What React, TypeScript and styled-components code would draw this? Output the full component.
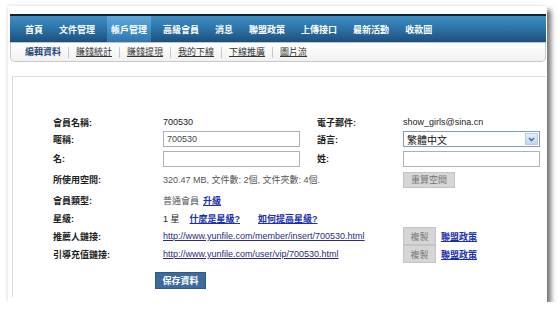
import React from "react";
import styled, { createGlobalStyle, css } from "styled-components";

const Global = createGlobalStyle`
  html, body { margin: 0; padding: 0; background: #ffffff; }
  body { font-family: "Liberation Sans", "Noto Sans CJK TC", sans-serif; font-size: 9px; color: #222; }
`;

const Page = styled.div`
  margin: 6px 0 0 8px;
  width: 539px;
  height: 296px;
  box-sizing: border-box;
  padding: 8px 1px 0 2px;
  background: #fff;
  display: flex;
  flex-direction: column;
  box-shadow: 4px 4px 5px rgba(0, 0, 0, 0.55), -1px -1px 3px rgba(0, 0, 0, 0.08);
`;

const Nav = styled.div`
  height: 28px;
  box-sizing: border-box;
  border-top: 2px solid #14212e;
  background: linear-gradient(#3f8fc4, #2a6fa3 55%, #1d4f7c);
  display: flex;
  align-items: stretch;
  padding-left: 7px;
`;

const NavItem = styled.div<{ $active?: boolean }>`
  margin: 0 4px;
  padding: 0 4px;
  display: flex;
  align-items: center;
  color: #fff;
  font-weight: bold;
  font-size: 9px;
  white-space: nowrap;
  ${(p) =>
    p.$active &&
    css`
      background: linear-gradient(#5fa9da, #3f8dc2 60%, #2f75ab);
    `}
`;

const SubNav = styled.div`
  height: 20px;
  box-sizing: border-box;
  border: 1px solid #c9c9c9;
  border-top: 1px solid #b9c6d2;
  border-radius: 0 0 5px 5px;
  background: linear-gradient(#ffffff, #f1f1f1);
  display: flex;
  align-items: center;
  padding-left: 14px;
`;

const SubItem = styled.a<{ $first?: boolean }>`
  padding: 0 7px;
  line-height: 11px;
  font-size: 9px;
  white-space: nowrap;
  color: #333;
  text-decoration: underline;
  border-left: 1px solid #c8c8c8;
  ${(p) =>
    p.$first &&
    css`
      padding-left: 0;
      border-left: none;
      font-weight: bold;
      color: #24477a;
      text-decoration: none;
    `}
`;

const Panel = styled.div`
  flex: 1;
  margin: 14px 0 5px 2px;
  border-top: 1px solid #dcdcdc;
  border-left: 1px solid #dcdcdc;
  padding: 37px 0 0 40px;
`;

const Form = styled.div`
  display: grid;
  grid-template-columns: 110px 154px 86px 137px;
  grid-template-rows: 16px 18px 21px 21px 20px 17px 18px 18px;
  align-items: center;
`;

const Label = styled.div`
  font-weight: bold;
  color: #222;
  white-space: nowrap;
`;

const Value = styled.div<{ $muted?: boolean }>`
  white-space: nowrap;
  color: ${(p) => (p.$muted ? "#555" : "#222")};
  display: flex;
  align-items: center;
  gap: 4px;
`;

const TextInput = styled.div`
  width: 137px;
  height: 16px;
  box-sizing: border-box;
  border: 1px solid #a9b0b8;
  background: #fff;
  padding-left: 3px;
  display: flex;
  align-items: center;
  color: #444;
`;

const Select = styled.div`
  width: 137px;
  height: 16px;
  box-sizing: border-box;
  border: 1px solid #7f9db9;
  background: #fff;
  display: flex;
  align-items: stretch;
  color: #111;
`;

const SelectText = styled.div`
  flex: 1;
  padding-left: 3px;
  display: flex;
  align-items: center;
  font-size: 10px;
`;

const SelectArrow = styled.div`
  width: 13px;
  margin: 1px;
  background: linear-gradient(#e4eefc, #c3d5f3);
  border: 1px solid #b9cbe9;
  box-sizing: border-box;
  display: flex;
  align-items: center;
  justify-content: center;
`;

const GreyButton = styled.div<{ $w: number; $h: number }>`
  width: ${(p) => p.$w}px;
  height: ${(p) => p.$h}px;
  box-sizing: border-box;
  background: #d6d6d6;
  border: 1px solid #c4c4c4;
  color: #777;
  display: flex;
  align-items: center;
  justify-content: center;
  white-space: nowrap;
`;

const CopyCell = styled.div`
  display: flex;
  align-items: center;
  gap: 5px;
  height: 100%;
`;

const Link = styled.a<{ $strong?: boolean }>`
  color: ${(p) => (p.$strong ? "#1a2fb0" : "#2b2b7a")};
  font-weight: ${(p) => (p.$strong ? "bold" : "normal")};
  text-decoration: underline;
  white-space: nowrap;
`;

const StarLinks = styled.div`
  display: flex;
  align-items: center;
  white-space: nowrap;
`;

const Gap = styled.span<{ $w: number }>`
  display: inline-block;
  flex: none;
  width: ${(p) => p.$w}px;
`;

const SaveButton = styled.div`
  margin: 9px 0 0 102px;
  width: 51px;
  height: 17px;
  background: #3b6a9c;
  border: 1px solid #2f5985;
  box-sizing: border-box;
  color: #fff;
  font-weight: bold;
  display: flex;
  align-items: center;
  justify-content: center;
`;

const navItems = ["首頁", "文件管理", "帳戶管理", "高級會員", "消息", "聯盟政策", "上傳接口", "最新活動", "收款圖"];
const subItems = ["編輯資料", "賺錢統計", "賺錢提現", "我的下線", "下線推廣", "圖片流"];

export default function App() {
  return (
    <>
      <Global />
      <Page>
        <Nav>
          {navItems.map((n) => (
            <NavItem key={n} $active={n === "帳戶管理"}>
              {n}
            </NavItem>
          ))}
        </Nav>
        <SubNav>
          {subItems.map((s, i) => (
            <SubItem key={s} $first={i === 0}>
              {s}
            </SubItem>
          ))}
        </SubNav>
        <Panel>
          <Form>
            <Label>會員名稱:</Label>
            <Value>700530</Value>
            <Label>電子郵件:</Label>
            <Value>show_girls@sina.cn</Value>

            <Label>暱稱:</Label>
            <TextInput>700530</TextInput>
            <Label>語言:</Label>
            <Select>
              <SelectText>繁體中文</SelectText>
              <SelectArrow>
                <svg width="7" height="5" viewBox="0 0 7 5">
                  <path d="M1 1 L3.5 3.5 L6 1" fill="none" stroke="#4d6185" strokeWidth="1.4" />
                </svg>
              </SelectArrow>
            </Select>

            <Label>名:</Label>
            <TextInput />
            <Label>姓:</Label>
            <TextInput />

            <Label>所使用空間:</Label>
            <Value $muted>320.47 MB, 文件數: 2個, 文件夾數: 4個.</Value>
            <div />
            <GreyButton $w={52} $h={16}>重算空間</GreyButton>

            <Label>會員類型:</Label>
            <Value $muted>
              普通會員 <Link $strong>升級</Link>
            </Value>
            <div />
            <div />

            <Label>星級:</Label>
            <StarLinks>
              <span>1 星</span>
              <Gap $w={10} />
              <Link $strong>什麼是星級?</Link>
              <Gap $w={18} />
              <Link $strong>如何提高星級?</Link>
            </StarLinks>
            <div />
            <div />

            <Label>推薦人鏈接:</Label>
            <Value>
              <Link>http://www.yunfile.com/member/insert/700530.html</Link>
            </Value>
            <div />
            <CopyCell>
              <GreyButton $w={33} $h={18}>複製</GreyButton>
              <Link $strong>聯盟政策</Link>
            </CopyCell>

            <Label>引導充值鏈接:</Label>
            <Value>
              <Link>http://www.yunfile.com/user/vip/700530.html</Link>
            </Value>
            <div />
            <CopyCell>
              <GreyButton $w={33} $h={18}>複製</GreyButton>
              <Link $strong>聯盟政策</Link>
            </CopyCell>
          </Form>
          <SaveButton>保存資料</SaveButton>
        </Panel>
      </Page>
    </>
  );
}
